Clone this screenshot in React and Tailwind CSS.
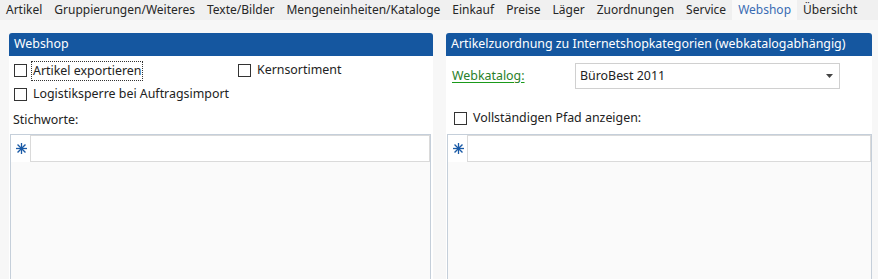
import React from "react";

const font = { fontFamily: '"Noto Sans", "Open Sans", sans-serif' };

function Box() {
  return (
    <span className="inline-block w-[13px] h-[13px] border border-[#333333] bg-white shrink-0" />
  );
}

function Star() {
  return (
    <svg width="11" height="11" viewBox="0 0 11 11" className="block">
      <g stroke="#1a5aa6" strokeWidth="1.3" strokeLinecap="square">
        <line x1="5.5" y1="0.5" x2="5.5" y2="10.5" />
        <line x1="0.5" y1="5.5" x2="10.5" y2="5.5" />
        <line x1="2" y1="2" x2="9" y2="9" />
        <line x1="9" y1="2" x2="2" y2="9" />
      </g>
    </svg>
  );
}

function ListBox({ className = "" }) {
  return (
    <div className={"flex-1 flex flex-col border-l border-t border-r border-[#c5cfda] bg-[#fafafa] " + className}>
      <div className="flex h-[27px]">
        <div className="w-[19px] bg-white flex items-center justify-center pl-[1px]">
          <Star />
        </div>
        <div className="flex-1 bg-white border border-[#dadada]" />
      </div>
    </div>
  );
}

export default function App() {
  const tabs = [
    "Artikel",
    "Gruppierungen/Weiteres",
    "Texte/Bilder",
    "Mengeneinheiten/Kataloge",
    "Einkauf",
    "Preise",
    "Läger",
    "Zuordnungen",
    "Service",
    "Webshop",
    "Übersicht",
  ];
  return (
    <div style={font} className="w-[878px] h-[279px] bg-[#f7f7f7] overflow-hidden flex flex-col text-[#222222]">
      <div className="h-[20px] bg-[#f0f0f0] flex items-stretch text-[12px] shrink-0">
        {tabs.map((t) => (
          <div
            key={t}
            className={
              "px-[6px] flex items-center leading-none " +
              (t === "Webshop" ? "bg-[#f9f9f9] text-[#3a6cb4]" : "text-[#262626]")
            }
          >
            {t}
          </div>
        ))}
      </div>
      <div className="flex-1 flex pt-[13px] pl-[9px] gap-[13px] min-h-0">
        {/* Left panel */}
        <div className="w-[424px] flex flex-col">
          <div className="h-[23px] bg-[#1557a0] rounded-t-[3px] text-white text-[12.4px] pl-[5px] flex items-center">
            Webshop
          </div>
          <div className="flex-1 bg-white flex flex-col text-[12.4px] min-h-0">
            <div className="flex items-center mt-[8px] h-[13px]">
              <div className="w-[229px] flex items-center pl-[5px]">
                <Box />
                <span className="ml-[5px] px-[1px] outline outline-1 outline-dotted outline-[#333] leading-[18px]">
                  Artikel exportieren
                </span>
              </div>
              <div className="flex items-center">
                <Box />
                <span className="ml-[6px]">Kernsortiment</span>
              </div>
            </div>
            <div className="flex items-center pl-[5px] mt-[11px] h-[13px]">
              <Box />
              <span className="ml-[6px]">Logistiksperre bei Auftragsimport</span>
            </div>
            <div className="pl-[4px] mt-[10px] h-[17px] leading-[17px]">Stichworte:</div>
            <div className="flex mt-[6px] pl-[1px] pr-[2px] flex-1">
              <ListBox />
            </div>
          </div>
        </div>
        {/* Right panel */}
        <div className="w-[426px] flex flex-col">
          <div className="h-[23px] bg-[#1557a0] rounded-t-[3px] text-white text-[12.4px] pl-[5px] flex items-center">
            Artikelzuordnung zu Internetshopkategorien (webkatalogabhängig)
          </div>
          <div className="flex-1 bg-white flex flex-col text-[12.4px] min-h-0">
            <div className="flex items-center mt-[7px] h-[26px]">
              <span className="w-[129px] pl-[6px] text-[#2a7f2a] underline decoration-[#1a9a1a] underline-offset-2">
                Webkatalog:
              </span>
              <div className="w-[265px] h-[26px] border border-[#d0d0d0] flex items-center pl-[4px] pr-[6px] bg-white">
                <span className="flex-1">BüroBest 2011</span>
                <svg width="7" height="4" viewBox="0 0 7 4">
                  <path d="M0 0 H7 L3.5 4 Z" fill="#444" />
                </svg>
              </div>
            </div>
            <div className="flex items-center pl-[8px] mt-[23px] h-[13px]">
              <Box />
              <span className="ml-[6px]">Vollständigen Pfad anzeigen:</span>
            </div>
            <div className="flex mt-[9px] pl-[1px] flex-1">
              <ListBox />
            </div>
          </div>
        </div>
      </div>
    </div>
  );
}
